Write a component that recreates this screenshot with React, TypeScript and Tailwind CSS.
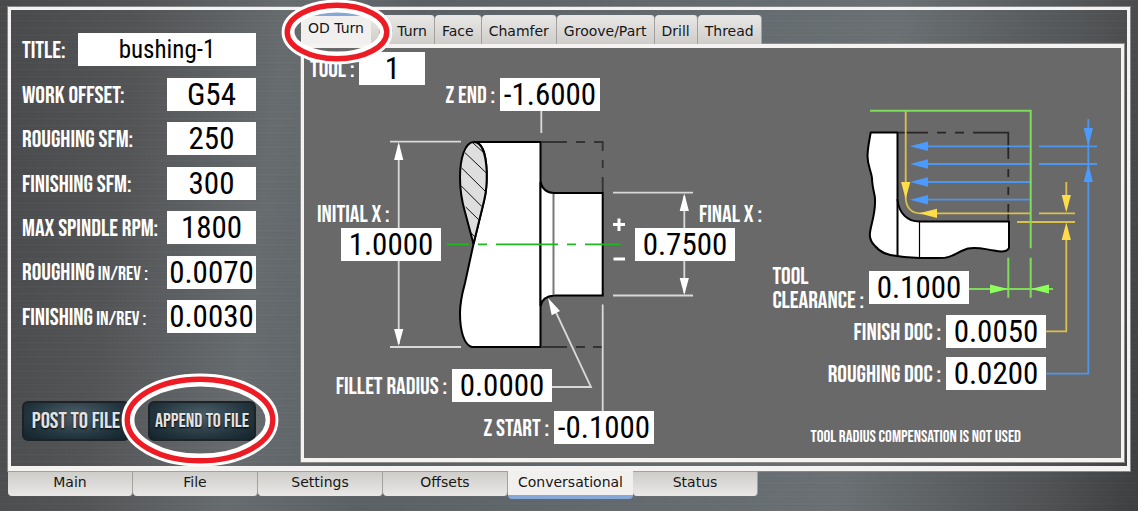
import { useState, type ReactNode } from "react";

const LABEL =
  "font-['Bebas_Neue','Roboto_Condensed','Liberation_Sans',sans-serif] text-[24px] leading-6 text-white whitespace-nowrap [&>span]:pt-[3px]";
const FIELD =
  "h-[33px] bg-white p-0 text-center font-['Roboto_Condensed','Liberation_Sans',sans-serif] text-black outline-none";

function NumberField({ value, className }: { value: string; className: string }) {
  return <input type="text" defaultValue={value} className={`${FIELD} text-[31px] ${className}`} />;
}

function FormRow({ label, unit, value, wide }: { label: string; unit?: string; value: string; wide?: boolean }) {
  return (
    <label className={`flex items-center justify-between ${LABEL}`}>
      <span>
        {label}
        {unit && <span className="text-[20px]"> {unit}</span>}
      </span>
      {wide ? (
        <input type="text" defaultValue={value} className={`${FIELD} w-[178px] text-[25px]`} />
      ) : (
        <NumberField value={value} className="w-[89px]" />
      )}
    </label>
  );
}

function Callout({ className, label, value }: { className: string; label: ReactNode; value: string }) {
  return (
    <label className={`absolute flex ${LABEL} ${className}`}>
      <span>{label}</span>
      <NumberField value={value} className="w-[100px]" />
    </label>
  );
}

function Ring({ className, rx, ry }: { className: string; rx: number; ry: number }) {
  const w = rx * 2 + 14;
  const h = ry * 2 + 14;
  return (
    <svg aria-hidden="true" width={w} height={h} className={`pointer-events-none absolute z-20 max-w-none ${className}`}>
      <ellipse cx={w / 2} cy={h / 2} rx={rx} ry={ry} fill="none" stroke="#fff" strokeWidth="12.8" />
      <ellipse cx={w / 2} cy={h / 2} rx={rx + 0.8} ry={ry + 0.8} fill="none" stroke="#ed1c24" strokeWidth="5.4" />
    </svg>
  );
}

function PartDrawing() {
  return (
    <svg aria-hidden="true" viewBox="304 48 817 410" className="absolute inset-0 size-full">
      {/* stock and turned shoulder */}
      <path
        d="M474 142H540.5V347H472C464 345 460 331 460 313C460 301 462 294 465 283L473.5 244L484 201C487 189 487 182 486.7 172C486 152 481 142 474 142Z"
        fill="#fff"
        stroke="#000"
        strokeWidth="2"
      />
      <path d="M540.5 182C542 188 546 193 554 193H602.7V295.5H554C547 296 542 299 540.5 306Z" fill="#fff" stroke="#000" strokeWidth="2" />
      <path d="M553.5 194V294.5" stroke="#777" strokeWidth="2" />
      <path
        d="M474 142C465 142 460 158 460 178C460 195 463 205 465 212L473.5 244L484 201C487 189 487 182 486.7 172C486 152 481 142 474 142Z"
        fill="#dedede"
        stroke="#000"
        strokeWidth="2"
      />
      <path
        d="M473 143L484 153M465 152.7L486.7 173.3M461.7 168L485.7 191.7M461 185.7L482 206.7M465.7 207L479 220M470 231.7L475 237"
        stroke="#111"
        strokeWidth="1"
      />
      <path
        d="M541 142H567M576 142H585M594 142H602.7V151M602.7 160V168M602.7 177V192M541 347H567M576 347H585M593 347H602.7"
        fill="none"
        stroke="#333"
        strokeWidth="1.8"
      />
      <path d="M446.7 244.3H469M478 244.3H487M496 244.3H558M567 244.3H576M585 244.3H620.7" stroke="#1fb81f" strokeWidth="1.8" />

      {/* white dimension lines */}
      <g stroke="#d9d9d9" strokeWidth="1.8" fill="none">
        <path d="M390 141.7H461M390 347H461M398.7 145V344" />
        <path d="M613 192.7H693M613 295.5H693M684.3 196V293" />
        <path d="M541.3 110V133M602.7 304.5V412" />
        <path d="M552 387H591L553 306" />
      </g>
      <g fill="#fff">
        <path d="M398.7 142L403.3 160H394.1ZM398.7 346L403.3 329H394.1Z" />
        <path d="M684.3 193.5L688.9 211H679.7ZM684.3 295L688.9 278H679.7Z" />
        <path d="M548 298L551.7 315.3L560 311Z" />
        <path d="M613 223H625V226H613ZM617.5 218.5H620.5V231H617.5ZM613.5 257.5H625V260.5H613.5Z" />
      </g>

      {/* tool path detail */}
      <path
        d="M870.7 132.5H897.5V200C899 213 907 221.5 919.5 221.5H1009V248C1007 252 1000 252 994 250.5C984 249 976 246.5 968 248.5C959 251 953 257 945 257.7C928 258.5 910 258 897 256C888 255.5 880 252 875 246C868 239 869.5 233 871.5 225C874 215 876 205 874.7 196C873 188 872 184 872 178C871 170 867.5 166 867.5 156C867.7 147 869.5 140 870.7 132.5Z"
        fill="#fff"
        stroke="#000"
        strokeWidth="2"
        strokeLinejoin="round"
      />
      <path d="M897.5 199V256" stroke="#000" strokeWidth="2" />
      <path d="M919.5 222V257" stroke="#000" strokeWidth="1.2" />
      <path
        d="M898 132.7H928M937 132.7H946M955 132.7H964M973 132.7H1008.3V159M1008.3 169V177M1008.3 187V195M1008.3 204V221"
        fill="none"
        stroke="#262626"
        strokeWidth="1.8"
      />
      <g stroke="#4c96ee" strokeWidth="1.8" fill="none">
        <path d="M925 146.3H1031M925 164H1031M925 182H1031M925 199.7H1031" />
        <path d="M1039 146.3H1097M1039 164H1097M1088.3 119V373.7H1046" />
      </g>
      <g fill="#4b9bff">
        <path d="M910 146.3L928 141.6V151ZM910 164L928 159.3V168.7ZM910 182L928 177.3V186.7ZM910 199.7L928 195V204.4Z" />
        <path d="M1088.3 146L1092.9 128H1083.7ZM1088.3 164L1092.9 182H1083.7Z" />
      </g>
      <g stroke="#dcc04c" strokeWidth="1.8" fill="none">
        <path d="M905.7 111V198C906 207 911 213.3 920 213.3H1031" />
        <path d="M1039 213.3H1075M1017 222H1075M1066.3 182V200M1066.3 236V331.3H1046" />
      </g>
      <g fill="#ffdc4a">
        <path d="M905.7 199L910.3 182H901.1ZM919 213.3L937 208.7V217.9Z" />
        <path d="M1066.3 212.5L1070.9 195H1061.7ZM1066.3 222.5L1070.9 240H1061.7Z" />
      </g>
      <path d="M870 110.7H1030.7V248.3M1030.7 257.7V297.7M1008.3 257.7V297.7M969 289H1053" fill="none" stroke="#7edc58" strokeWidth="2" />
      <path d="M1008.3 289L990 284.4V293.6ZM1030.7 289L1049 284.4V293.6Z" fill="#8cff5c" />
    </svg>
  );
}

const OPERATIONS = ["OD Turn", "ID Turn", "Face", "Chamfer", "Groove/Part", "Drill", "Thread"];
const SCREENS = ["Main", "File", "Settings", "Offsets", "Conversational", "Status"];

const ACTION =
  "h-10 w-[108px] rounded-md border-2 border-[#1d2226] bg-[radial-gradient(ellipse_at_50%_35%,#4d616a,#22343d_65%,#14232b)] font-['Bebas_Neue','Roboto_Condensed','Liberation_Sans',sans-serif] leading-none text-[#e2e2e2] whitespace-nowrap [text-shadow:0_1px_2px_#000]";

export default function App() {
  const [operation, setOperation] = useState("OD Turn");
  const [screen, setScreen] = useState("Conversational");

  return (
    <main className="min-h-screen bg-[repeating-linear-gradient(180deg,rgba(255,255,255,0.025)_0px,rgba(0,0,0,0.03)_2px,rgba(255,255,255,0.012)_3px,rgba(0,0,0,0.015)_5px,rgba(255,255,255,0.025)_7px),linear-gradient(97deg,#48494b_0%,#535456_12%,#676c6f_24%,#5a6165_35%,#626a6e_55%,#6a7073_75%,#505254_92%,#3d3e40_100%)] px-2 pt-[7px] font-['DejaVu_Sans',sans-serif] text-[14px] text-[#161616]">
      <section className="flex border-[3px] border-b-[5px] border-[#f4f3f1] shadow-[0_0_0_1px_#85888a]">
        <form className="flex w-[290px] shrink-0 flex-col justify-between pt-[23px] pr-[45px] pb-[25px] pl-[11px]">
          <div className="flex h-[300px] flex-col justify-between">
            <FormRow label="Title:" value="bushing-1" wide />
            <FormRow label="Work Offset:" value="G54" />
            <FormRow label="Roughing SFM:" value="250" />
            <FormRow label="Finishing SFM:" value="300" />
            <FormRow label="Max Spindle RPM:" value="1800" />
            <FormRow label="Roughing" unit="in/rev :" value="0.0070" />
            <FormRow label="Finishing" unit="in/rev :" value="0.0030" />
          </div>
          <div className="flex gap-[18px]">
            <button type="button" className={`${ACTION} text-[23px]`}>
              Post to File
            </button>
            <div className="relative">
              <button type="button" className={`${ACTION} text-[20px]`}>
                Append to File
              </button>
              <Ring rx={72} ry={40} className="-top-7 -left-[27px]" />
            </div>
          </div>
        </form>

        <div className="flex min-w-0 flex-1 flex-col pr-[3px] pb-1">
          <div role="tablist" className="flex h-[34px] items-end">
            {OPERATIONS.map((name) => {
              const active = name === operation;
              return (
                <div key={name} className="relative">
                  <button
                    type="button"
                    role="tab"
                    aria-selected={active}
                    onClick={() => setOperation(name)}
                    className={
                      active
                        ? "block h-8 rounded-t border-t-4 border-[#86a8d8] bg-[#f1f0ef] px-[7px] pb-1"
                        : "block h-[29px] rounded-t-sm border-r border-[#a3a19e] bg-linear-to-b from-[#e9e8e6] to-[#cfcdca] px-[7px] pt-[3px]"
                    }
                  >
                    {name}
                  </button>
                  {name === "OD Turn" && <Ring rx={49} ry={26} className="-top-[13px] -left-[20px]" />}
                </div>
              );
            })}
          </div>
          <div className="border-[3px] border-t-4 border-b-4 border-[#f4f3f1] bg-[#696969] shadow-[0_0_0_1px_#8b8b8b]">
            <div className="relative mx-auto h-[410px] w-[817px]">
              <PartDrawing />
              <label className={`absolute top-[4px] left-[6px] flex items-center gap-[5px] ${LABEL}`}>
                <span>Tool :</span>
                <NumberField value="1" className="w-[66px]" />
              </label>
              <Callout className="top-[30px] right-[521px] items-center gap-[5px]" label="Z End :" value="-1.6000" />
              <Callout className="top-[152px] left-[13px] flex-col items-start gap-px [&>input]:ml-6" label="Initial X :" value="1.0000" />
              <Callout className="top-[152px] left-[331px] flex-col items-start gap-px [&>span]:ml-16" label="Final X :" value="0.7500" />
              <Callout className="top-[321px] right-[569px] items-center gap-[5px]" label="Fillet Radius :" value="0.0000" />
              <Callout className="top-[363px] right-[467px] items-center gap-[5px]" label="Z Start :" value="-0.1000" />
              <Callout
                className="top-[214px] right-[152px] items-center gap-[5px]"
                label={
                  <>
                    Tool
                    <br />
                    Clearance :
                  </>
                }
                value="0.1000"
              />
              <Callout className="top-[267px] right-[75px] items-center gap-[5px]" label="Finish DOC :" value="0.0050" />
              <Callout className="top-[309px] right-[75px] items-center gap-[5px]" label="Roughing DOC :" value="0.0200" />
              <p className="absolute top-[381px] right-[100px] font-['Bebas_Neue','Roboto_Condensed','Liberation_Sans',sans-serif] text-[17px] leading-4 whitespace-nowrap text-white">
                Tool radius compensation is not used
              </p>
            </div>
          </div>
        </div>
      </section>

      <nav role="tablist" className="flex items-start">
        {SCREENS.map((name) => {
          const active = name === screen;
          return (
            <button
              key={name}
              type="button"
              role="tab"
              aria-selected={active}
              onClick={() => setScreen(name)}
              className={
                active
                  ? "h-7 w-[125px] rounded-b border-b-4 border-[#86a8d8] bg-[#f1f0ef] pb-px"
                  : "h-[25px] w-[125px] rounded-b-sm border-t border-r border-[#a3a19e] bg-linear-to-b from-[#cfcdca] to-[#e9e8e6] pb-1"
              }
            >
              {name}
            </button>
          );
        })}
      </nav>
    </main>
  );
}
